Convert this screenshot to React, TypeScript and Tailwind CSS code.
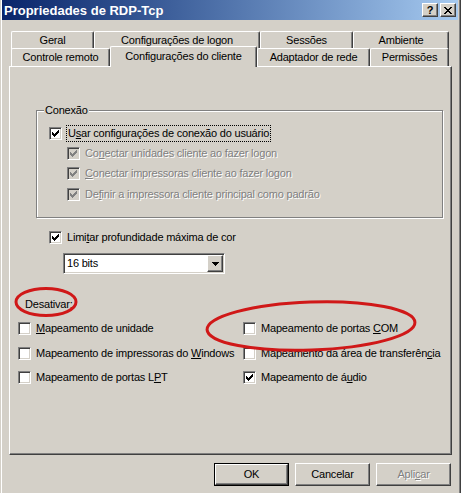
import type { ReactNode } from 'react';

// Classic Win2000 dialog: "Propriedades de RDP-Tcp" / Configurações do cliente

function CheckBox({ checked = false, disabled = false }: { checked?: boolean; disabled?: boolean }) {
  return (
    <span
      className={`flex h-[13px] w-[13px] shrink-0 items-center justify-center border border-t-[#808080] border-l-[#808080] border-b-white border-r-white shadow-[inset_1px_1px_0_#404040,inset_-1px_-1px_0_#d4d0c8] ${
        disabled ? 'bg-[#d4d0c8]' : 'bg-white'
      }`}
    >
      {checked && (
        <svg width="7" height="7" viewBox="0 0 7 7" shapeRendering="crispEdges">
          <path
            d="M6 0h1v1h-1z M5 1h2v1h-2z M0 2h1v1h-1z M4 2h3v1h-3z M0 3h2v1h-2z M3 3h3v1h-3z M0 4h5v1h-5z M1 5h3v1h-3z M2 6h1v1h-1z"
            fill={disabled ? '#808080' : '#000'}
          />
        </svg>
      )}
    </span>
  );
}

function Row({ children, checked, disabled, className = '' }: { children: ReactNode; checked?: boolean; disabled?: boolean; className?: string }) {
  return (
    <div className={`flex items-center ${className}`}>
      <CheckBox checked={checked} disabled={disabled} />
      <span
        className={`ml-[5px] whitespace-nowrap ${disabled ? 'text-[#808080] [text-shadow:1px_1px_0_#fff]' : ''}`}
      >
        {children}
      </span>
    </div>
  );
}

function Tab({ label, width, active = false }: { label: string; width: string; active?: boolean }) {
  if (active) {
    return (
      <div
        className={`relative z-10 -mt-[2px] flex h-[21px] items-center justify-center rounded-t-[2px] border-l border-t border-r border-white border-r-[#404040] bg-[#d4d0c8] pb-[2px] shadow-[inset_-1px_0_0_#808080] ${width}`}
      >
        {label}
      </div>
    );
  }
  return (
    <div
      className={`flex h-[18px] items-center justify-center rounded-t-[2px] border-l border-t border-r border-white border-r-[#404040] shadow-[inset_-1px_0_0_#808080] ${width}`}
    >
      {label}
    </div>
  );
}

function Button({ children, isDefault = false, disabled = false }: { children: ReactNode; isDefault?: boolean; disabled?: boolean }) {
  return (
    <div className={`h-[23px] w-[75px] ${isDefault ? 'border border-black' : ''}`}>
      <div
        className={`flex h-full w-full items-center justify-center border border-white border-r-[#404040] border-b-[#404040] shadow-[inset_-1px_-1px_0_#808080] ${
          disabled ? 'text-[#808080] [text-shadow:1px_1px_0_#fff]' : ''
        }`}
      >
        {children}
      </div>
    </div>
  );
}

function TitleButton({ children }: { children: ReactNode }) {
  return (
    <div className="flex h-[14px] w-[16px] items-center justify-center border border-white border-r-[#404040] border-b-[#404040] bg-[#d4d0c8] shadow-[inset_-1px_-1px_0_#808080]">
      {children}
    </div>
  );
}

export default function App() {
  return (
    <div className="relative h-[493px] w-[461px] overflow-hidden bg-[#d4d0c8] font-['Liberation_Sans',Arial,sans-serif] text-[11px] leading-[13px] tracking-[-0.2px] text-black shadow-[inset_1px_0_0_#d4d0c8,inset_2px_0_0_#fff,inset_-1px_0_0_#404040,inset_-2px_0_0_#808080]">
      {/* title bar */}
      <div className="ml-[2px] mr-[3px] flex h-[20px] items-center bg-gradient-to-r from-[#0a246a] to-[#a6caf0] pl-[2px] pr-[2px]">
        <span className="text-[13px] font-bold tracking-normal text-white">Propriedades de RDP-Tcp</span>
        <div className="ml-auto flex gap-[2px]">
          <TitleButton>
            <span className="text-[11px] font-bold leading-none">?</span>
          </TitleButton>
          <TitleButton>
            <svg width="8" height="7" viewBox="0 0 8 7" shapeRendering="crispEdges">
              <path d="M0 0h2v1h-2z M6 0h2v1h-2z M1 1h2v1h-2z M5 1h2v1h-2z M2 2h4v1h-4z M3 3h2v1h-2z M2 4h4v1h-4z M1 5h2v1h-2z M5 5h2v1h-2z M0 6h2v1h-2z M6 6h2v1h-2z" fill="#000" />
            </svg>
          </TitleButton>
        </div>
      </div>

      {/* tabs + page */}
      <div className="ml-[9px] mt-[11px] w-[443px]">
        <div className="flex h-[17px] pl-[2px]">
          <Tab label="Geral" width="w-[83px]" />
          <Tab label="Configurações de logon" width="w-[166px]" />
          <Tab label="Sessões" width="w-[93px]" />
          <Tab label="Ambiente" width="w-[96px]" />
        </div>
        <div className="flex h-[18px] items-start pl-[2px]">
          <Tab label="Controle remoto" width="w-[99px]" />
          <Tab label="Configurações do cliente" width="w-[147px]" active />
          <Tab label="Adaptador de rede" width="w-[113px]" />
          <Tab label="Permissões" width="w-[79px]" />
        </div>

        <div className="h-[389px] border border-white border-r-[#404040] border-b-[#404040] shadow-[inset_-1px_-1px_0_#808080]">
          {/* Conexão group */}
          <div className="ml-[26px] mt-[43px] h-[108px] w-[407px] border border-[#808080] shadow-[inset_1px_1px_0_#fff,1px_1px_0_#fff]">
            <span className="-mt-[7px] ml-[7px] block w-fit bg-[#d4d0c8] px-[1px]">Conexão</span>
            <div className="ml-[12px] mt-[8px] flex h-[17px] items-center">
              <CheckBox checked />
              <span className="ml-[4px] whitespace-nowrap border border-dotted border-black px-[1px] py-[1px]">
                U<u>s</u>ar configurações de conexão do usuário
              </span>
            </div>
            <div className="ml-[30px] mt-[1px]">
              <Row checked disabled className="h-[20.5px]">
                Co<u>n</u>ectar unidades cliente ao fazer logon
              </Row>
              <Row checked disabled className="h-[20.5px]">
                <u>C</u>onectar impressoras cliente ao fazer logon
              </Row>
              <Row checked disabled className="h-[20.5px]">
                De<u>f</u>inir a impressora cliente principal como padrão
              </Row>
            </div>
          </div>

          <Row checked className="ml-[39px] mt-[11px] h-[17px]">
            Limi<u>t</u>ar profundidade máxima de cor
          </Row>

          {/* color depth combo */}
          <div className="ml-[53px] mt-[7px] flex h-[21px] w-[162px] border border-[#808080] border-r-white border-b-white bg-white shadow-[inset_1px_1px_0_#404040,inset_-1px_-1px_0_#d4d0c8]">
            <span className="flex flex-1 items-center pl-[3px]">16 bits</span>
            <div className="m-[1px] flex w-[16px] items-center justify-center border border-white border-r-[#404040] border-b-[#404040] bg-[#d4d0c8] shadow-[inset_-1px_-1px_0_#808080]">
              <svg width="7" height="4" viewBox="0 0 7 4" shapeRendering="crispEdges">
                <path d="M0 0h7v1h-7z M1 1h5v1h-5z M2 2h3v1h-3z M3 3h1v1h-1z" fill="#000" />
              </svg>
            </div>
          </div>

          <div className="ml-[15px] mt-[24px]">Desativar:</div>

          <div className="ml-[8px] mt-[9px] grid grid-cols-[225px_1fr] gap-y-[7.5px]">
            <Row className="h-[17px]">
              <u>M</u>apeamento de unidade
            </Row>
            <Row className="h-[17px]">
              Mapeamento de portas <u>C</u>OM
            </Row>
            <Row className="h-[17px]">
              Mapeamento de impressoras do <u>W</u>indows
            </Row>
            <Row className="h-[17px]">
              Mapeamento da área de transferên<u>c</u>ia
            </Row>
            <Row className="h-[17px]">
              Mapeamento de portas L<u>P</u>T
            </Row>
            <Row checked className="h-[17px]">
              Mapeamento de á<u>u</u>dio
            </Row>
          </div>
        </div>
      </div>

      {/* buttons */}
      <div className="mt-[8px] flex justify-end gap-[6px] pr-[10px]">
        <Button isDefault>OK</Button>
        <Button>Cancelar</Button>
        <Button disabled>
          Apli<u>c</u>ar
        </Button>
      </div>

      {/* red hand-drawn annotations over the dialog */}
      <svg className="pointer-events-none absolute left-0 top-0" width="461" height="493" viewBox="0 0 461 493">
        <ellipse cx="46" cy="302" rx="30" ry="13.5" fill="none" stroke="#d01818" strokeWidth="3" />
        <ellipse cx="311" cy="326" rx="104" ry="24" fill="none" stroke="#d01818" strokeWidth="3" transform="rotate(-2 311 326)" />
      </svg>
    </div>
  );
}
